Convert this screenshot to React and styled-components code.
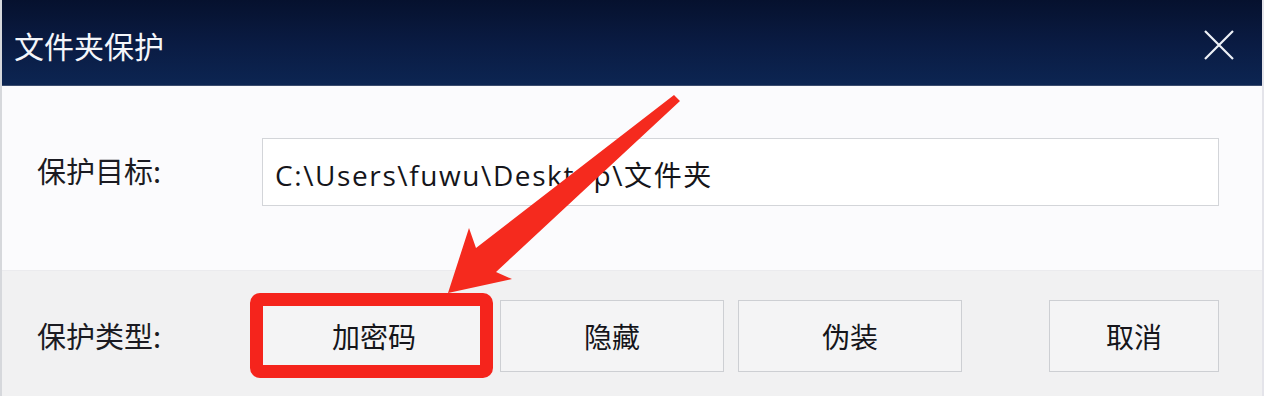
import React from "react";
import styled, { createGlobalStyle } from "styled-components";

const Global = createGlobalStyle`
  html, body { margin: 0; padding: 0; background: #ffffff; }
  body { font-family: "Noto Sans CJK SC", "Noto Sans", sans-serif; }
`;

const Window = styled.div`
  position: relative;
  width: 1264px;
  height: 396px;
  display: flex;
  flex-direction: column;
  overflow: hidden;
  box-sizing: border-box;
  border-left: 2px solid #d6d8dc;
  border-right: 2px solid #e4e4ea;
`;

const TitleBar = styled.div`
  height: 85px;
  flex: none;
  display: flex;
  align-items: center;
  justify-content: space-between;
  padding: 0 28px 0 14px;
  margin: 0 -2px;
  background: linear-gradient(180deg, #06112e 0%, #0a1c44 55%, #0c2552 100%);
  border-bottom: 1px solid #3b4c6e;
`;

const Title = styled.div`
  color: #f4f6fa;
  font-size: 30px;
  font-weight: 400;
  line-height: 1;
  padding-top: 4px;
`;

const CloseButton = styled.div`
  width: 34px;
  height: 34px;
  display: flex;
  align-items: center;
  justify-content: center;
  padding-top: 4px;
`;

const TopSection = styled.div`
  height: 184px;
  flex: none;
  background: #fbfbfd;
  display: flex;
  align-items: center;
  padding-left: 35px;
  padding-bottom: 12px;
  box-sizing: border-box;
`;

const BottomSection = styled.div`
  flex: 1;
  background: #f1f1f2;
  border-top: 1px solid #ebebee;
  display: flex;
  align-items: center;
  padding-left: 35px;
  padding-top: 4px;
  box-sizing: border-box;
`;

const Label = styled.div`
  width: 225px;
  flex: none;
  font-size: 29px;
  color: #1b1b22;
  line-height: 1;
  padding-bottom: ${(p) => p.$pb || 0}px;
`;

const PathInput = styled.div`
  width: 957px;
  height: 68px;
  box-sizing: border-box;
  border: 1px solid #d3d5d9;
  background: #ffffff;
  display: flex;
  align-items: center;
  padding: 4px 0 0 12px;
  font-family: "Open Sans", "Noto Sans CJK SC", sans-serif;
  font-size: 28px;
  letter-spacing: 1.6px;
  color: #15151a;
  white-space: nowrap;
`;

const ButtonRow = styled.div`
  display: flex;
  align-items: center;
  gap: 14px;
`;

const Button = styled.div`
  position: relative;
  width: ${(p) => p.$w}px;
  height: 72px;
  box-sizing: border-box;
  border: 1px solid #cdcfd3;
  background: #f4f4f5;
  display: flex;
  align-items: center;
  justify-content: center;
  font-size: 28px;
  color: #15151a;
  margin-left: ${(p) => p.$ml || 0}px;
`;

const Highlight = styled.div`
  position: absolute;
  top: -8px;
  left: -13px;
  right: -8px;
  bottom: -7px;
  border: 13px solid #f5241c;
  border-radius: 10px;
  pointer-events: none;
`;

const Overlay = styled.svg`
  position: absolute;
  left: 0;
  top: 0;
  width: 1264px;
  height: 396px;
  pointer-events: none;
`;

export default function App() {
  return (
    <>
      <Global />
      <Window>
        <TitleBar>
          <Title>文件夹保护</Title>
          <CloseButton>
            <svg width="32" height="32" viewBox="0 0 32 32">
              <path d="M2 2 L30 30 M30 2 L2 30" stroke="#eef1f6" strokeWidth="2.2" fill="none" />
            </svg>
          </CloseButton>
        </TitleBar>
        <TopSection>
          <Label $pb={4}>保护目标:</Label>
          <PathInput>C:\Users\fuwu\Desktop\文件夹</PathInput>
        </TopSection>
        <BottomSection>
          <Label>保护类型:</Label>
          <ButtonRow>
            <Button $w={224}>
              加密码
              <Highlight />
            </Button>
            <Button $w={224}>隐藏</Button>
            <Button $w={224}>伪装</Button>
            <Button $w={170} $ml={73}>取消</Button>
          </ButtonRow>
        </BottomSection>
        <Overlay viewBox="0 0 1264 396">
          <polygon
            points="446,293 467,228 474,248 672,95 678,101 494,272 510,279"
            fill="#f52a1e"
          />
        </Overlay>
      </Window>
    </>
  );
}
